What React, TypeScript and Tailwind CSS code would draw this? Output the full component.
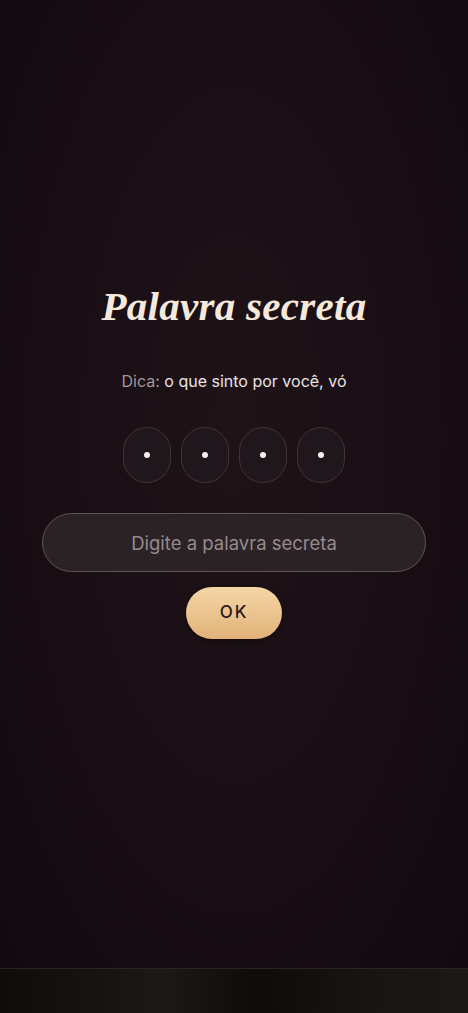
import { useState } from "react";

const App = () => {
    const [word, setWord] = useState("");
    const pins = [0, 1, 2, 3];

    return (
        <div className="w-[468px] h-[1013px] flex flex-col bg-[#150c11] overflow-hidden">
            {/* Main */}
            <div className="flex-1 flex flex-col items-center bg-[radial-gradient(ellipse_at_50%_45%,#1f1318_0%,#180e13_55%,#130a0f_100%)]">
                <h1
                    className="mt-[282px] text-[41px] leading-[48px] font-bold italic text-[#f6e9dc] tracking-[0.3px]"
                    style={{ fontFamily: '"Liberation Serif", "DejaVu Serif", serif' }}
                >
                    Palavra secreta
                </h1>

                <p
                    className="mt-[39px] text-[16px] leading-[24px] text-[#ece3e5]"
                    style={{ fontFamily: 'Inter, "Noto Sans", sans-serif' }}
                >
                    <span className="text-[#a3969b]">Dica:</span> o que sinto por você, vó
                </p>

                {/* Pins */}
                <div className="mt-[34px] flex gap-[10px]">
                    {pins.map((i) => (
                        <div
                            key={i}
                            className="w-[48px] h-[56px] rounded-[24px] border border-[#3f3539] bg-[#1f171b] flex items-center justify-center"
                        >
                            <div className="w-[6px] h-[6px] rounded-full bg-[#f4eeee]" />
                        </div>
                    ))}
                </div>

                {/* Input */}
                <input
                    value={word}
                    onChange={(e) => setWord(e.target.value)}
                    placeholder="Digite a palavra secreta"
                    className="mt-[30px] w-[384px] h-[59px] rounded-full border border-[#5f5457] bg-[#2b2226] text-center text-[18.5px] text-[#ece3e5] placeholder:text-[#978a8e] outline-none"
                    style={{ fontFamily: 'Inter, "Noto Sans", sans-serif' }}
                />

                <button
                    className="mt-[15px] w-[96px] h-[52px] rounded-full bg-[linear-gradient(180deg,#f4d7a6_0%,#e2b179_100%)] text-[17px] font-medium tracking-[2px] text-[#2a1a1d] shadow-[0_2px_6px_rgba(0,0,0,0.35)]"
                    style={{ fontFamily: 'Inter, "Noto Sans", sans-serif' }}
                >
                    OK
                </button>
            </div>

            {/* Bottom strip */}
            <div className="h-[45px] border-t border-[#2a2522] bg-[linear-gradient(90deg,#0f0c0b_0%,#1b1a17_35%,#0e0b0a_55%,#181613_80%,#1b1916_100%)]" />
        </div>
    );
};

export default App;
